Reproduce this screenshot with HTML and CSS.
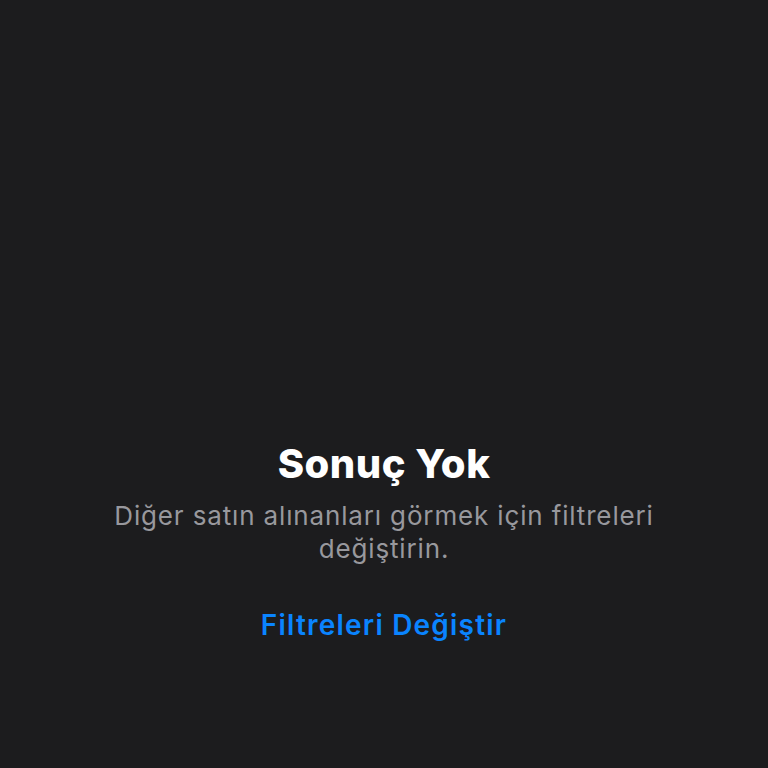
FILE: index.html
```html
<!DOCTYPE html>
<html lang="tr">
<head>
<meta charset="UTF-8" />
<meta name="viewport" content="width=device-width, initial-scale=1" />
<title>Sonuç Yok</title>
<link rel="stylesheet" href="styles.css">
</head>
<body>
    <div class="empty">
        <h1 class="empty-title">Sonuç Yok</h1>
        <p class="empty-text">Diğer satın alınanları görmek için filtreleri değiştirin.</p>
        <a class="empty-link" href="#">Filtreleri Değiştir</a>
    </div>
</body>
</html>
```

FILE: styles.css
```css
/* General Reset */
* {
    margin: 0;
    padding: 0;
    box-sizing: border-box;
}

body {
    font-family: 'Inter', 'Roboto', sans-serif;
    background-color: #1c1c1e;
    min-height: 100vh;
    display: flex;
    flex-direction: column;
    align-items: center;
}

/* Empty state */
.empty {
    display: flex;
    flex-direction: column;
    align-items: center;
    text-align: center;
    padding-top: 440px;
    width: 600px;
}

.empty-title {
    font-size: 40px;
    font-weight: 800;
    line-height: 48px;
    letter-spacing: 0.5px;
    color: #ffffff;
}

.empty-text {
    margin-top: 11px;
    font-size: 26px;
    line-height: 33px;
    letter-spacing: 0.85px;
    color: #98989d;
    font-weight: 400;
}

.empty-link {
    margin-top: 42px;
    font-size: 28px;
    font-weight: 600;
    line-height: 36px;
    letter-spacing: 1.2px;
    color: #0a84ff;
    text-decoration: none;
}
```
